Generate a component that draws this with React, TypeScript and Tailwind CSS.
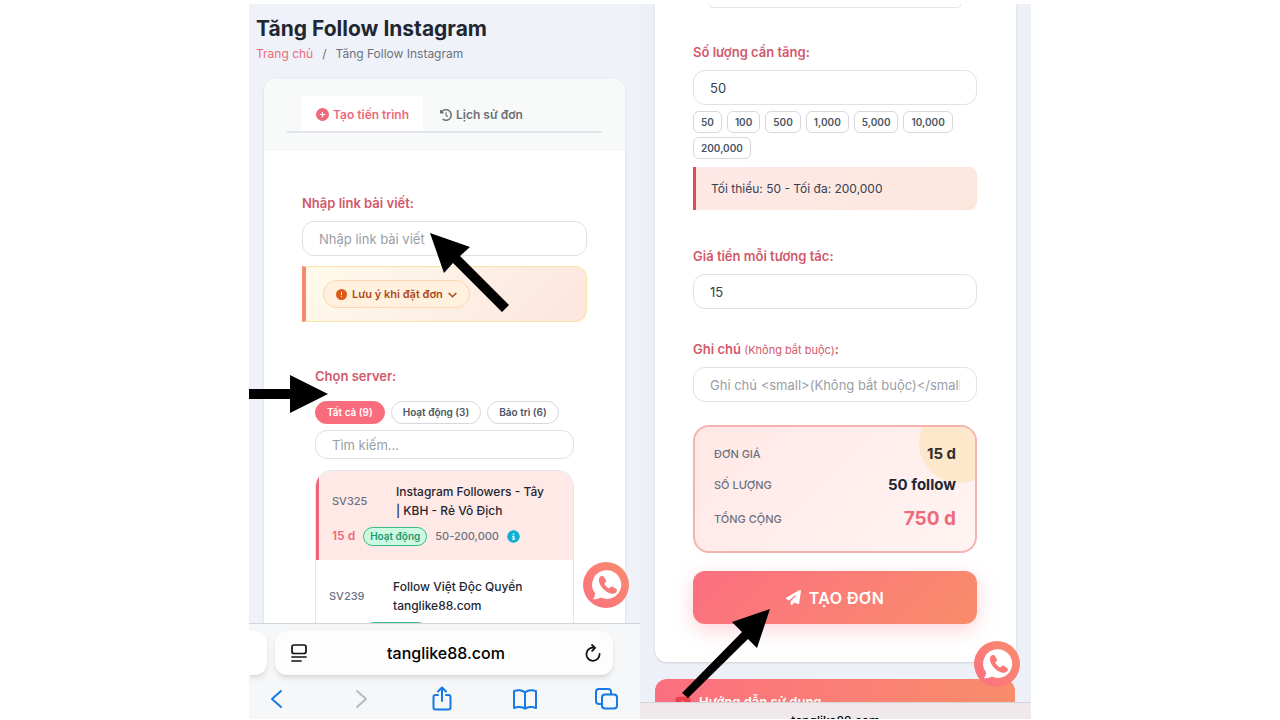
import type { ReactNode } from "react"
import {
  FaChevronDown,
  FaCircleExclamation,
  FaCircleInfo,
  FaCirclePlus,
  FaClockRotateLeft,
  FaPaperPlane,
  FaYoutube,
} from "react-icons/fa6"

const filters = [
  { label: "Tất cả (9)", active: true },
  { label: "Hoạt động (3)", active: false },
  { label: "Bảo trì (6)", active: false },
]

const amounts = ["50", "100", "500", "1,000", "5,000", "10,000", "200,000"]

const labelClass = "block text-[13px] leading-5 font-semibold text-[#d2596b]"
const inputClass =
  "block w-full h-[35px] rounded-xl border border-[#dfe1e6] bg-white px-4 text-[13px] text-[#374151] placeholder:text-[#9a9ea6] outline-none"

function ChatButton({ className }: { className: string }) {
  return (
    <button
      type="button"
      aria-label="Liên hệ"
      className={`absolute size-[46px] rounded-full bg-linear-to-tr from-[#fb6f7f] to-[#f98c6c] ${className}`}
    >
      <svg viewBox="0 0 46 46" className="size-full">
        <path
          fill="#fff"
          d="M24 8.300a14.300 14.300 0 1 1-6.200 27.200c-2 1.300-5 2-8 1.800 1.500-1.500 2.300-3.500 2.200-6.200A14.300 14.300 0 0 1 24 8.300Z"
        />
        <path
          fill="#f97b77"
          d="M17.600 14.300c.9-.9 2.200-.9 2.900.1l2.200 3.300c.6.9.5 1.800-.2 2.500l-1.300 1.300c1 2.200 2.700 3.900 4.900 4.900l1.500-1.300c.7-.7 1.600-.8 2.500-.2l3.100 2.200c1 .7 1 1.900.2 2.800-1.500 1.600-3.600 2.200-5.800 1.500-5.500-1.600-9.900-6-11.500-11.400-.6-2.200-.2-4.100 1.500-5.700Z"
        />
      </svg>
    </button>
  )
}

function Arrow({ points, className, viewBox }: { points: string; className: string; viewBox: string }) {
  return (
    <svg viewBox={viewBox} className={`absolute pointer-events-none ${className}`} aria-hidden="true">
      <polygon points={points} fill="#000" />
    </svg>
  )
}

function ToolButton({ label, muted, children }: { label: string; muted?: boolean; children: ReactNode }) {
  return (
    <button type="button" aria-label={label} className={muted ? "text-[#b9babd]" : "text-[#1579e6]"}>
      <svg
        viewBox="0 0 26 26"
        className="size-[26px]"
        fill="none"
        stroke="currentColor"
        strokeWidth="2"
        strokeLinecap="round"
        strokeLinejoin="round"
      >
        {children}
      </svg>
    </button>
  )
}

function BrowserBar() {
  return (
    <div className="relative shrink-0 overflow-hidden border-t border-[#d3d5d9] bg-[#f6f7f8] pt-[7px]">
      <div className="flex gap-2">
        <div className="h-11 w-[18px] shrink-0 rounded-r-xl bg-white shadow-md" />
        <div className="flex h-11 flex-1 items-center rounded-xl bg-[#fdfdfd] pr-3 pl-4 shadow-md">
          <svg viewBox="0 0 16 18" className="h-[18px] w-4" fill="none" stroke="#111" strokeWidth="1.700" strokeLinecap="round">
            <rect x="1" y="1" width="14" height="8.500" rx="2" />
            <path d="M1 13h14M1 17h9" />
          </svg>
          <span className="flex-1 text-center text-base font-medium text-black">tanglike88.com</span>
          <button type="button" aria-label="Tải lại">
            <svg viewBox="0 0 16 18" className="h-[18px] w-4" fill="none" stroke="#111" strokeWidth="1.800" strokeLinecap="round" strokeLinejoin="round">
              <path d="M9.500 3.800A6.600 6.600 0 1 0 14.600 10" />
              <path d="M7 1l3 2.800L7.200 6.800" />
            </svg>
          </button>
        </div>
        <div className="w-[19px] shrink-0" />
      </div>
      <div className="flex items-center justify-between pt-[11px] pr-5 pb-[7px] pl-[15px]">
        <ToolButton label="Quay lại">
          <path d="M17 5l-9 8 9 8" />
        </ToolButton>
        <ToolButton label="Tiến" muted>
          <path d="M10 5l9 8-9 8" />
        </ToolButton>
        <ToolButton label="Chia sẻ">
          <path d="M9 9H6.500A2 2 0 0 0 4.500 11v10.500a2 2 0 0 0 2 2h13a2 2 0 0 0 2-2V11a2 2 0 0 0-2-2H17M13 15V1.800M9 5.500l4-4 4 4" />
        </ToolButton>
        <ToolButton label="Dấu trang">
          <path d="M13 6.500C10.500 4 5.500 3.500 2 5.200V22c3.500-1.500 8.500-1.200 11 .8 2.500-2 7.500-2.300 11-.8V5.200C20.500 3.500 15.500 4 13 6.500ZM13 6.500v16" />
        </ToolButton>
        <ToolButton label="Thẻ">
          <path d="M7.500 18H5a3 3 0 0 1-3-3V6a3 3 0 0 1 3-3h9a3 3 0 0 1 3 3v2" />
          <rect x="8" y="8.500" width="15" height="14" rx="3" />
        </ToolButton>
      </div>
    </div>
  )
}

function CreateScreen() {
  return (
    <section className="relative flex h-full min-w-0 flex-col overflow-hidden bg-[#eff2f8]">
      <div className="min-h-0 flex-1 overflow-hidden">
        <header className="px-[7px] pt-[9px]">
          <h1 className="text-[21px] leading-8 font-bold text-[#1f2733]">Tăng Follow Instagram</h1>
          <nav className="flex gap-[9px] text-[12px] leading-[18px] text-[#6b7280]">
            <a href="#" className="text-[#ed6b7b]">Trang chủ</a>
            <span>/</span>
            <span>Tăng Follow Instagram</span>
          </nav>
        </header>

        <div className="mx-[15px] mt-4 rounded-xl bg-white shadow-sm">
          <div className="rounded-t-xl border-b border-[#eff1f2] bg-[#f8faf9] px-[23px] pt-[17px] pb-4">
            <div className="flex gap-[3px] border-b-2 border-[#e2e6ec] pl-[15px]">
              <button type="button" className="flex h-[35px] items-center gap-1 bg-white px-[14px] pt-0.5 text-[12px] font-semibold text-[#ee6a7b]">
                <FaCirclePlus size={13} />
                Tạo tiến trình
              </button>
              <button type="button" className="flex h-[35px] items-center gap-1 px-[14px] pt-0.5 text-[12px] font-semibold text-[#6b7077]">
                <FaClockRotateLeft size={12} />
                Lịch sử đơn
              </button>
            </div>
          </div>

          <div className="px-[38px] pt-[43px] pb-10">
            <label htmlFor="link" className={labelClass}>Nhập link bài viết:</label>
            <input id="link" type="text" placeholder="Nhập link bài viết" className={`${inputClass} mt-2`} />

            <div className="mt-[10px] rounded-r-xl border border-l-4 border-[#fbe3a6] border-l-[#f58a6c] bg-linear-135 from-[#fffbea] via-[#fdf0e6] to-[#fde5de] px-[17px] py-[13px]">
              <button type="button" className="flex h-7 items-center gap-[5px] rounded-full border border-[#fbd7ac] bg-[#fff1de] px-3 text-[11px] font-semibold text-[#b04a1c]">
                <FaCircleExclamation size={11} className="text-[#de5a1a]" />
                Lưu ý khi đặt đơn
                <FaChevronDown size={9} stroke="currentColor" strokeWidth={30} />
              </button>
            </div>

            <div className="px-[13px] pt-11">
              <label htmlFor="server" className={labelClass}>Chọn server:</label>
              <div className="mt-[15px] flex gap-[6px]">
                {filters.map((f) => (
                  <button
                    key={f.label}
                    type="button"
                    className={`h-[23px] rounded-full border px-[11px] text-[10px] font-semibold whitespace-nowrap ${
                      f.active ? "border-[#f96c7d] bg-[#f96c7d] text-white" : "border-[#d6d8dc] bg-white text-[#4b5563]"
                    }`}
                  >
                    {f.label}
                  </button>
                ))}
              </div>
              <input
                id="server"
                type="text"
                placeholder="Tìm kiếm..."
                className="mt-[6px] block h-[29px] w-full rounded-xl border border-[#dfe1e5] bg-white px-4 text-[13px] placeholder:text-[#9a9ea6] outline-none"
              />

              <ul className="mt-[11px] overflow-hidden rounded-2xl border border-[#e3e5e9]">
                <li className="border-l-[3px] border-[#f0637a] bg-[#ffe9e6] px-[13px] pt-[11px] pb-[14px]">
                  <div className="flex items-center text-[12px] leading-[19px]">
                    <span className="w-16 shrink-0 text-[11px] font-medium text-[#6b7280]">SV325</span>
                    <span className="font-medium text-[#1f2733]">
                      Instagram Followers - Tây
                      <br />| KBH - Rẻ Vô Địch
                    </span>
                  </div>
                  <div className="mt-[6px] flex items-center">
                    <span className="text-[12px] leading-5 font-semibold text-[#ee6a7b]">15 d</span>
                    <span className="ml-2 h-[19px] rounded-full border border-[#3cb98a] bg-[#cdf9e3] px-[6px] text-[10px] leading-[17px] font-semibold text-[#1d9a6c]">
                      Hoạt động
                    </span>
                    <span className="ml-2 text-[11px] font-medium text-[#6b7280]">50-200,000</span>
                    <FaCircleInfo size={13} className="ml-2 rounded-full bg-white text-[#12b0d3]" />
                  </div>
                </li>
                <li className="px-[13px] pt-[17px] pb-3">
                  <div className="flex items-center text-[12px] leading-[19px]">
                    <span className="w-16 shrink-0 text-[11px] font-medium text-[#6b7280]">SV239</span>
                    <span className="font-medium text-[#1f2733]">
                      Follow Việt Độc Quyền
                      <br />
                      tanglike88.com
                    </span>
                  </div>
                  <div className="mt-[7px] ml-[35px] h-[19px] w-16 rounded-full border border-[#3cb98a] bg-[#cdf9e3]" />
                </li>
              </ul>
            </div>
          </div>
        </div>
      </div>

      <BrowserBar />

      <ChatButton className="right-[11px] bottom-[111px]" />
      <Arrow viewBox="0 0 80 80" points="0,0 40,14 30,23 79,72 72,79 23,30 14,40" className="top-[229px] left-[181px] size-20" />
      <Arrow viewBox="0 0 80 38" points="0,14 41,14 41,0 79,19 41,38 41,24 0,24" className="top-[371px] left-0 h-[38px] w-20" />
    </section>
  )
}

function OrderScreen() {
  return (
    <section className="relative flex h-full min-w-0 flex-col overflow-hidden bg-[#edf1f7]">
      <div className="min-h-0 flex-1 overflow-hidden">
        <div className="mx-[15px] rounded-b-xl bg-white pr-[39px] pb-[38px] pl-[38px] shadow-sm">
          <div className="mx-4 h-1 overflow-hidden rounded-b-xl border border-t-0 border-[#e3e5e9]" />

          <label htmlFor="amount" className={`${labelClass} mt-[34px]`}>Số lượng cần tăng:</label>
          <input id="amount" type="text" defaultValue="50" className={`${inputClass} mt-2`} />
          <div className="mt-[6px] flex flex-wrap gap-x-[5px] gap-y-1">
            {amounts.map((a) => (
              <button
                key={a}
                type="button"
                className="h-[22px] rounded-md border border-[#d6d8dd] bg-white px-[7px] text-[10px] font-semibold text-[#4b5563]"
              >
                {a}
              </button>
            ))}
          </div>
          <p className="mt-2 rounded-r-lg border-l-[3px] border-[#e04a52] bg-linear-135 from-[#ffe9e8] to-[#fce6dc] px-[15px] py-3 text-[12px] leading-[19px] text-[#374151]">
            Tối thiểu: 50 - Tối đa: 200,000
          </p>

          <label htmlFor="price" className={`${labelClass} mt-9`}>Giá tiền mỗi tương tác:</label>
          <input id="price" type="text" defaultValue="15" className={`${inputClass} mt-2`} />

          <label htmlFor="note" className={`${labelClass} mt-[30px]`}>
            Ghi chú <small className="text-[11px] leading-none font-normal">(Không bắt buộc)</small>:
          </label>
          <input id="note" type="text" placeholder="Ghi chú <small>(Không bắt buộc)</small>" className={`${inputClass} mt-2`} />

          <div className="relative mt-[23px] overflow-hidden rounded-2xl border-2 border-[#f4b3ae] bg-linear-135 from-[#ffe8e6] to-[#fff4f3] px-[19px] pt-[15px] pb-[17px]">
            <div className="absolute -top-6 -right-6 size-20 rounded-full bg-[#fde8cb]" />
            <dl className="relative flex flex-col gap-[7px] text-[11px] font-medium text-[#6b7280]">
              <div className="flex items-center justify-between">
                <dt>ĐƠN GIÁ</dt>
                <dd className="text-[15px] leading-6 font-bold text-[#33302f]">15 d</dd>
              </div>
              <div className="flex items-center justify-between">
                <dt>SỐ LƯỢNG</dt>
                <dd className="text-[15px] leading-6 font-bold text-[#1f2733]">50 follow</dd>
              </div>
              <div className="flex items-center justify-between">
                <dt>TỔNG CỘNG</dt>
                <dd className="text-[19px] leading-[30px] font-bold text-[#ee6a7b]">750 d</dd>
              </div>
            </dl>
          </div>

          <button
            type="button"
            className="mt-[18px] flex h-[53px] w-full items-center justify-center gap-2 rounded-xl bg-linear-135 from-[#fb6f80] to-[#f98c6a] text-base font-semibold tracking-wide text-white shadow-[0_6px_20px_rgba(251,111,128,0.3)]"
          >
            <FaPaperPlane size={15} />
            TẠO ĐƠN
          </button>
        </div>

        <div className="mr-4 ml-[15px] mt-[17px] flex items-center gap-2 rounded-t-xl bg-linear-to-r from-[#fb6f80] to-[#f98c6a] px-5 pt-[13px] pb-4 text-[13px] leading-5 font-semibold text-white">
          <FaYoutube size={16} className="text-[#e8414b]" />
          Hướng dẫn sử dụng
        </div>
      </div>

      <div className="h-[17px] shrink-0 overflow-hidden border-t border-[#d6d3d6] bg-[#efe9ec] pt-[10px] text-center text-[12px] leading-4 font-medium text-black">
        tanglike88.com
      </div>

      <ChatButton className="right-[11px] bottom-8" />
      <Arrow viewBox="0 0 92 92" points="88,1 75,40 66,31 6,90 0,85 60,24 50,14" className="top-[604px] left-[42px] size-[92px]" />
    </section>
  )
}

export default function App() {
  return (
    <main className="min-h-screen bg-white font-['Inter',sans-serif]">
      <div className="mx-auto grid h-screen max-w-[782px] grid-cols-2 pt-1 pb-px">
        <CreateScreen />
        <OrderScreen />
      </div>
    </main>
  )
}
